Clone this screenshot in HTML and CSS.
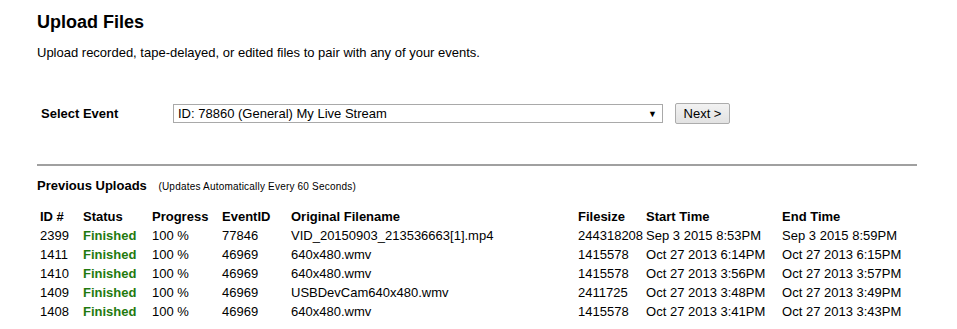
FILE: index.html
```html
<!DOCTYPE html>
<html lang="en">
<head>
  <meta charset="UTF-8" />
  <title>Upload Files</title>
  <link rel="stylesheet" href="styles.css">
</head>
<body>

  <!-- Header -->
  <div class="page">
    <h1>Upload Files</h1>
    <p class="intro">Upload recorded, tape-delayed, or edited files to pair with any of your events.</p>

    <!-- Event picker -->
    <div class="select-row">
      <label for="event">Select Event</label>
      <div class="select-box" id="event">
        <span>ID: 78860 (General) My Live Stream</span>
        <span class="arrow">&#9660;</span>
      </div>
      <button type="button" class="next-btn">Next &gt;</button>
    </div>

    <hr>

    <!-- Uploads table -->
    <div class="uploads-title">Previous Uploads <small>(Updates Automatically Every 60 Seconds)</small></div>

    <table class="uploads">
      <thead>
        <tr>
          <th class="c-id">ID #</th>
          <th class="c-status">Status</th>
          <th class="c-progress">Progress</th>
          <th class="c-event">EventID</th>
          <th class="c-name">Original Filename</th>
          <th class="c-size">Filesize</th>
          <th class="c-start">Start Time</th>
          <th>End Time</th>
        </tr>
      </thead>
      <tbody>
        <tr>
          <td>2399</td><td class="done">Finished</td><td>100 %</td><td>77846</td>
          <td>VID_20150903_213536663[1].mp4</td><td>244318208</td><td>Sep 3 2015 8:53PM</td><td>Sep 3 2015 8:59PM</td>
        </tr>
        <tr>
          <td>1411</td><td class="done">Finished</td><td>100 %</td><td>46969</td>
          <td>640x480.wmv</td><td>1415578</td><td>Oct 27 2013 6:14PM</td><td>Oct 27 2013 6:15PM</td>
        </tr>
        <tr>
          <td>1410</td><td class="done">Finished</td><td>100 %</td><td>46969</td>
          <td>640x480.wmv</td><td>1415578</td><td>Oct 27 2013 3:56PM</td><td>Oct 27 2013 3:57PM</td>
        </tr>
        <tr>
          <td>1409</td><td class="done">Finished</td><td>100 %</td><td>46969</td>
          <td>USBDevCam640x480.wmv</td><td>2411725</td><td>Oct 27 2013 3:48PM</td><td>Oct 27 2013 3:49PM</td>
        </tr>
        <tr>
          <td>1408</td><td class="done">Finished</td><td>100 %</td><td>46969</td>
          <td>640x480.wmv</td><td>1415578</td><td>Oct 27 2013 3:41PM</td><td>Oct 27 2013 3:43PM</td>
        </tr>
      </tbody>
    </table>
  </div>

</body>
</html>
```

FILE: styles.css
```css
* {
  margin: 0;
  padding: 0;
  box-sizing: border-box;
  font-family: 'Liberation Sans', Arial, sans-serif;
}

body {
  background: #fff;
  color: #000;
  font-size: 13px;
}

.page {
  padding: 11px 40px 0 37px;
}

h1 {
  font-size: 18px;
  font-weight: bold;
  line-height: 22px;
}

.intro {
  margin-top: 12px;
  line-height: 16px;
}

/* Select Event row */
.select-row {
  display: flex;
  align-items: center;
  margin-top: 42px;
  padding-left: 4px;
}

.select-row label {
  width: 132px;
  font-weight: bold;
}

.select-box {
  display: flex;
  justify-content: space-between;
  align-items: center;
  width: 490px;
  height: 19px;
  border: 1px solid #a9a9a9;
  padding: 0 5px 0 4px;
  background: #fff;
}

.select-box .arrow {
  font-size: 9px;
}

.next-btn {
  margin-left: 12px;
  width: 55px;
  height: 21px;
  font-size: 13px;
  color: #000;
  border: 1px solid #acacac;
  border-radius: 2px;
  background: linear-gradient(#f2f2f2, #e2e2e2);
}

hr {
  border: none;
  border-top: 2px solid #a0a0a0;
  margin-top: 40px;
  width: 880px;
}

/* Previous uploads */
.uploads-title {
  margin-top: 12px;
  font-weight: bold;
}

.uploads-title small {
  font-weight: normal;
  font-size: 10px;
  letter-spacing: 0.2px;
  margin-left: 8px;
}

.uploads {
  border-collapse: collapse;
  margin-top: 14px;
}

.uploads th,
.uploads td {
  text-align: left;
  padding: 0 3px;
  height: 19px;
  white-space: nowrap;
}

/* filesize column sits tight against start time */
.uploads th:nth-child(6),
.uploads td:nth-child(6) {
  padding-right: 0;
}

.c-id { width: 43px; }
.c-status { width: 69px; }
.c-progress { width: 70px; }
.c-event { width: 69px; }
.c-name { width: 287px; }
.c-size { width: 68px; }
.c-start { width: 136px; }

.done {
  color: #1f7a0f;
  font-weight: bold;
}
```
